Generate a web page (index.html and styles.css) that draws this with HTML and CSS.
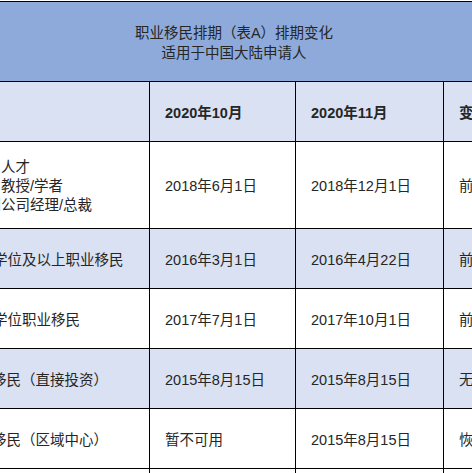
FILE: index.html
```html
<!DOCTYPE html>
<html lang="zh-CN">
<head>
<meta charset="utf-8">
<title>职业移民排期（表A）排期变化</title>
<link rel="stylesheet" href="styles.css">
</head>
<body>
<div class="viewport">
  <div class="grid">
    <div class="cell title">职业移民排期（表A）排期变化<br>适用于中国大陆申请人</div>

    <div class="cell head blue"></div>
    <div class="cell head blue date">2020年10月</div>
    <div class="cell head blue date">2020年11月</div>
    <div class="cell head blue date">变化</div>

    <div class="cell lbl">
      <div class="lbl-text">
        <div><span class="cut cut-2">杰出</span>人才</div>
        <div><span class="cut cut-2">杰出</span>教授/学者</div>
        <div><span class="cut cut-2">跨国</span>公司经理/总裁</div>
      </div>
    </div>
    <div class="cell date">2018年6月1日</div>
    <div class="cell date">2018年12月1日</div>
    <div class="cell date">前进6个月</div>

    <div class="cell lbl blue"><div class="lbl-text"><span class="cut cut-1">学</span>位及以上职业移民</div></div>
    <div class="cell date blue">2016年3月1日</div>
    <div class="cell date blue">2016年4月22日</div>
    <div class="cell date blue">前进52天</div>

    <div class="cell lbl"><div class="lbl-text"><span class="cut cut-1">学</span>位职业移民</div></div>
    <div class="cell date">2017年7月1日</div>
    <div class="cell date">2017年10月1日</div>
    <div class="cell date">前进3个月</div>

    <div class="cell lbl blue"><div class="lbl-text"><span class="cut cut-1b">移</span>民（直接投资）</div></div>
    <div class="cell date blue">2015年8月15日</div>
    <div class="cell date blue">2015年8月15日</div>
    <div class="cell date blue">无变化</div>

    <div class="cell lbl"><div class="lbl-text"><span class="cut cut-1b">移</span>民（区域中心）</div></div>
    <div class="cell date">暂不可用</div>
    <div class="cell date">2015年8月15日</div>
    <div class="cell date">恢复</div>

    <div class="cell lbl"></div>
    <div class="cell date"></div>
    <div class="cell date"></div>
    <div class="cell date"></div>
  </div>
</div>
</body>
</html>
```

FILE: styles.css
```css
html, body {
  margin: 0;
  padding: 0;
  background: #ffffff;
}

.viewport {
  width: 472px;
  height: 473px;
  overflow: hidden;
  padding-top: 1px;
  box-sizing: border-box;
}

.grid {
  display: grid;
  grid-template-columns: 149px 145px 147px 120px;
  grid-template-rows: 79px 59px 86px 59px 59px 59px 59px 40px;
  gap: 1px;
  padding-top: 1px;
  background: #000000;
  width: max-content;
  font-family: "Liberation Sans", "Noto Sans CJK SC", sans-serif;
  font-size: 14.5px;
  color: #262626;
}

.cell {
  background: #ffffff;
  display: flex;
  align-items: center;
  white-space: nowrap;
  overflow: hidden;
  line-height: 19px;
  padding-top: 3px;
  box-sizing: border-box;
}

.blue {
  background: #d9e1f2;
}

.title {
  grid-column: 1 / 5;
  background: #8eaadb;
  justify-content: center;
  text-align: center;
  line-height: 20px;
  padding-right: 96px;
}

.head {
  font-weight: bold;
}

.date {
  padding-left: 15px;
}

.lbl-text {
  display: block;
}

.cut {
  display: inline-block;
}

.cut-2 {
  margin-left: -28px;
}

.cut-1 {
  margin-left: -7px;
}

.cut-1b {
  margin-left: -8px;
}
```
